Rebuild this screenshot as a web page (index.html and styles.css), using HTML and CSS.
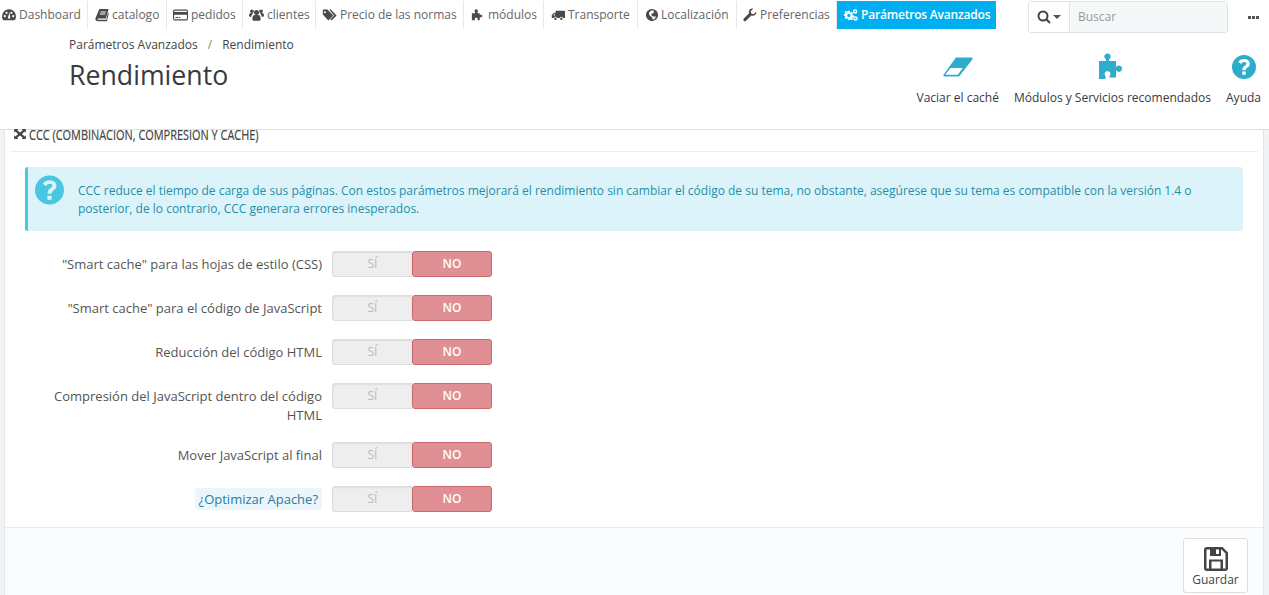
FILE: index.html
```html
<!DOCTYPE html>
<html lang="es">
<head>
<meta charset="utf-8">
<title>Rendimiento</title>
<link rel="stylesheet" href="styles.css">
</head>
<body>
<header class="topbar">
  <nav class="nav">
    <a class="nav-item w-dash"><svg class="ni" viewBox="0 0 16 16"><path fill-rule="evenodd" d="M8 1.500a7.800 7.800 0 0 0-8 7.800c0 1.800.6 3.500 1.500 4.700h13c.9-1.200 1.500-2.900 1.500-4.700a7.800 7.800 0 0 0-8-7.800zM3.200 8a1.300 1.300 0 1 1 0 2.600 1.300 1.300 0 0 1 0-2.600zm2-3.800a1.300 1.300 0 1 1 0 2.600 1.300 1.300 0 0 1 0-2.600zm5.600 0a1.300 1.300 0 1 1 0 2.600 1.300 1.300 0 0 1 0-2.600zM12.800 8a1.300 1.300 0 1 1 0 2.600 1.300 1.300 0 0 1 0-2.600zM8.600 4.500 9.500 12H6.500z"/></svg>Dashboard</a>
    <a class="nav-item w-cat"><svg class="ni" viewBox="0 0 16 16"><path d="M5 1h10.500l-3 11H4c-1.200 0-1.400 1.300-.2 1.300H13l1.800-8 1 .6-2.200 9.100H3c-2 0-3-1.500-2.400-3.500zm1.500 3-.3 1h6l.3-1zm-.7 2.300-.3 1h6l.3-1z"/></svg>catalogo</a>
    <a class="nav-item w-ped"><svg class="ni wide" viewBox="0 0 18 16"><path fill-rule="evenodd" d="M2 1.500h14a2 2 0 0 1 2 2v9a2 2 0 0 1-2 2H2a2 2 0 0 1-2-2v-9a2 2 0 0 1 2-2zm-.7 3h15.400v-1c0-.4-.3-.7-.7-.7H2c-.4 0-.7.300-.7.700zm0 3.200v4.800c0 .4.300.7.700.7h14c.4 0 .7-.3.7-.7V7.700zM3 10.500h3v1H3zm4 0h2v1H7z"/></svg>pedidos</a>
    <a class="nav-item w-cli"><svg class="ni wide" viewBox="0 0 18 16"><circle cx="9" cy="5" r="3"/><circle cx="3.500" cy="3.500" r="2.200"/><circle cx="14.500" cy="3.500" r="2.200"/><path d="M4 13c0-3 1-5 3-5h4c2 0 3 2 3 5 0 1-1 2-2 2H6c-1 0-2-1-2-2zM0 9c0-2 1-3.300 2-3.300h3c-1 1-2 2-2 4.300H1c-.6 0-1-.4-1-1zM18 9c0-2-1-3.300-2-3.300h-3c1 1 2 2 2 4.300h2c.6 0 1-.4 1-1z"/></svg>clientes</a>
    <a class="nav-item w-pre"><svg class="ni wide" viewBox="0 0 18 16"><path fill-rule="evenodd" d="M1 1.500h5.500l7 7-6 6-6.500-7zM3.500 3.500a1.200 1.200 0 1 0 0 2.400 1.200 1.200 0 0 0 0-2.400z"/><path d="M8.500 1.500h2l7 7-6 6-1.500-1.500 4.500-4.500z"/></svg>Precio de las normas</a>
    <a class="nav-item w-mod"><svg class="ni" viewBox="0 0 16 16"><path d="M1 6h3.500V4.500c-.8-1-.4-3 1.500-3s2.300 2 1.500 3V6H10v2.300c1-.8 3-.8 3 .9s-2 1.800-3 1V14H7.500v-1.200c.5-1-.3-1.800-1.500-1.800s-2 .8-1.500 1.800V14H1z"/></svg>módulos</a>
    <a class="nav-item w-tra"><svg class="ni" viewBox="0 0 18 16"><path fill-rule="evenodd" d="M6 2.500h11c.6 0 1 .4 1 1V12h-2.500a2.200 2.200 0 0 0-4.300 0H7.800a2.200 2.200 0 0 0-4.300 0H1V8l3-3h2zM5 6.200 2.800 8.500H5z"/><circle cx="5.700" cy="12.800" r="1.500"/><circle cx="13.300" cy="12.800" r="1.500"/></svg>Transporte</a>
    <a class="nav-item w-loc"><svg class="ni globe" viewBox="0 0 16 16"><path fill-rule="evenodd" d="M8 1a7 7 0 1 0 0 14A7 7 0 0 0 8 1zM5 4.500l3-2 2.500 1-1 2.500-2.500.5 1 2.500 2.500 1 2-1-1 3-2.500 1.500-1-3-2-1.500-1.500-2z"/></svg>Localización</a>
    <a class="nav-item w-prf"><svg class="ni" viewBox="0 0 16 16"><path d="M15 4.200 12.200 7 9.500 6.300 8.800 3.600 11.600.8C9.500 0 7 1.500 6.700 4c-.1.800 0 1.300.3 2L1 12c-.8.800-.8 1.700 0 2.500s1.700.8 2.500 0l6-6c2.800 1 6.200-1 5.500-4.300z"/></svg>Preferencias</a>
    <a class="nav-item active"><svg class="ni wide" viewBox="0 0 18 16"><path fill-rule="evenodd" d="M6 3h2l.3 1.500 1.200.6 1.300-.7 1.200 1.300-.8 1.200.5 1.300 1.500.3v1.800l-1.500.3-.5 1.300.8 1.200-1.200 1.300-1.300-.8-1.200.5L8 14H6l-.3-1.500-1.200-.5-1.300.8L2 11.500l.8-1.200-.5-1.300L.8 8.700V7l1.500-.3.500-1.300L2 4.200l1.200-1.300 1.300.8 1.200-.6zM7 6.500a2 2 0 1 0 0 4 2 2 0 0 0 0-4z"/><path fill-rule="evenodd" d="M14.500 1a2.700 2.700 0 1 0 0 5.400 2.700 2.700 0 0 0 0-5.400zm0 1.700a1 1 0 1 1 0 2 1 1 0 0 1 0-2zM15 9.500a2.700 2.700 0 1 0 0 5.400 2.700 2.700 0 0 0 0-5.400zm0 1.700a1 1 0 1 1 0 2 1 1 0 0 1 0-2z"/></svg>Parámetros Avanzados</a>
  </nav>
  <div class="search">
    <button class="search-btn" type="button"><svg class="search-ic" viewBox="0 0 14 14"><circle cx="6" cy="6" r="4.500"/><path d="M9.300 9.300 13 13"/></svg><span class="caret"></span></button>
    <span class="search-input">Buscar</span>
  </div>
  <span class="dots"><i></i><i></i><i></i></span>
</header>

<section class="page-head">
  <div class="head-left">
    <p class="crumbs">Parámetros Avanzados<span class="sep">/</span>Rendimiento</p>
    <h1 class="title">Rendimiento</h1>
  </div>
  <div class="tools">
    <a class="tool"><svg class="tool-ic" viewBox="0 0 34 28"><path fill-rule="evenodd" d="M14 5c.5-.6 1-1 2-1h15c1.500 0 2 1 1 2.200L19 23c-.6.800-1.200 1-2 1H3c-1.500 0-2-1.200-1-2.300zM9 15 3.700 21.800c-.2.300 0 .5.300.5h12c.5 0 .9-.2 1.200-.6l5-6.700z"/></svg>Vaciar el caché</a>
    <a class="tool"><svg class="tool-ic" viewBox="0 0 30 28"><path d="M2 8h7V6.500C7.500 5 7 3.800 7.500 2.500 8 1.200 9.200.5 10.500.5s2.600.7 3 2c.5 1.300 0 2.500-1.500 4V8h7v6c1.300-1.200 2.600-1.700 4-1.200 1.300.4 2 1.700 2 3s-.7 2.500-2 3c-1.400.4-2.700 0-4-1.300v7h-6.500v-1.500c1-1.300 1.200-2.400.7-3.300-.5-1-1.300-1.500-2.700-1.500s-2.300.5-2.700 1.500c-.5 1 0 2 .7 3.300V26H2z"/></svg>Módulos y Servicios recomendados</a>
    <a class="tool"><svg class="tool-ic" viewBox="0 0 28 28"><path fill-rule="evenodd" d="M14 2a12 12 0 1 0 0 24 12 12 0 0 0 0-24zm-1.700 16.500h3.400v3.300h-3.400zM14 6c3.300 0 5.800 2 5.800 4.800 0 2-1 3-2.500 4-1 .7-1.500 1-1.600 2.500h-3.300c0-2.500.8-3.500 2.300-4.500 1-.7 1.700-1.100 1.700-2 0-1-.9-1.700-2.300-1.700-1.500 0-2.400.8-3 2L8.200 9.100C9.300 7.200 11.300 6 14 6z"/></svg>Ayuda</a>
  </div>
</section>

<div class="content">
<main class="panel">
  <h2 class="panel-title"><svg class="pt-ic" viewBox="0 0 14 12"><path d="M0 0h5L3.600 1.400 7 4.300 10.400 1.400 9 0h5v4.400l-1.500-1.300L9.300 6l3.200 2.900L14 7.600V12H9l1.400-1.400L7 7.700l-3.400 2.900L5 12H0V7.600l1.500 1.300L4.700 6 1.500 3.100 0 4.400z"/></svg><span class="pt-text">CCC (COMBINACION, COMPRESION Y CACHE)</span></h2>

  <div class="alert">
    <svg class="alert-ic" viewBox="0 0 28 28"><path fill-rule="evenodd" d="M14 0a14 14 0 1 0 0 28 14 14 0 0 0 0-28zm-2 19.500h4v3.800h-4zM14 4.500c3.800 0 6.700 2.300 6.700 5.500 0 2.300-1.200 3.500-2.900 4.600-1.100.8-1.700 1.200-1.800 2.900h-3.800c0-2.900.9-4 2.600-5.200 1.200-.8 2-1.300 2-2.300 0-1.200-1-2-2.700-2-1.700 0-2.700.9-3.400 2.300L7.500 8c1.300-2.200 3.600-3.500 6.500-3.500z"/></svg>
    <p class="alert-text">CCC reduce el tiempo de carga de sus páginas. Con estos parámetros mejorará el rendimiento sin cambiar el código de su tema, no obstante, asegúrese que su tema es compatible con la versión 1.4 o posterior, de lo contrario, CCC generara errores inesperados.</p>
  </div>

  <div class="form">
    <div class="row"><label class="lbl">"Smart cache" para las hojas de estilo (CSS)</label><div class="sw"><span class="si">SÍ</span><span class="no">NO</span></div></div>
    <div class="row"><label class="lbl">"Smart cache" para el código de JavaScript</label><div class="sw"><span class="si">SÍ</span><span class="no">NO</span></div></div>
    <div class="row"><label class="lbl">Reducción del código HTML</label><div class="sw"><span class="si">SÍ</span><span class="no">NO</span></div></div>
    <div class="row"><label class="lbl">Compresión del JavaScript dentro del código HTML</label><div class="sw"><span class="si">SÍ</span><span class="no">NO</span></div></div>
    <div class="row"><label class="lbl">Mover JavaScript al final</label><div class="sw"><span class="si">SÍ</span><span class="no">NO</span></div></div>
    <div class="row last"><label class="lbl"><span class="hint">¿Optimizar Apache?</span></label><div class="sw"><span class="si">SÍ</span><span class="no">NO</span></div></div>
  </div>

  <footer class="panel-foot">
    <button class="save" type="button"><svg class="save-ic" viewBox="0 0 24 24"><path fill-rule="evenodd" d="M3 0h15.500L24 5.500V21a3 3 0 0 1-3 3H3a3 3 0 0 1-3-3V3a3 3 0 0 1 3-3zm-.5 2.500v19h2.500v-9h14v9h2.500V6.500l-4-4H17v6.500H6V2.500zM7.500 14.500v7h9v-7zM12 2.500v4.500h3V2.500z"/></svg>Guardar</button>
  </footer>
</main>
</div>
</body>
</html>
```
FILE: styles.css
```css
* { box-sizing: border-box; }
html, body { margin: 0; padding: 0; }
body {
  width: 1269px;
  height: 595px;
  overflow: hidden;
  background: #fff;
  font-family: "Open Sans", sans-serif;
  font-size: 12px;
  color: #555;
}
.topbar { display: flex; height: 29px; padding-top: 1px; position: relative; }
.nav { display: flex; height: 28px; width: 996px; flex: none; }
.nav-item {
  display: flex;
  align-items: center;
  height: 28px;
  padding-bottom: 1px;
  border-right: 1px solid #e8e8e8;
  color: #666;
  white-space: nowrap;
  font-size: 12px;
}
.ni { width: 14px; height: 14px; margin-right: 3px; fill: #4a4a4a; flex: none; }
.ni.wide { width: 15px; }
.ni.globe { margin-right: 2px; }
.w-dash { width: 88px; padding-left: 2px; }
.w-cat { width: 79px; padding-left: 7px; }
.w-ped { width: 76px; padding-left: 6px; }
.w-cli { width: 73px; padding-left: 6px; }
.w-pre { width: 148px; padding-left: 6px; }
.w-mod { width: 80px; padding-left: 7px; }
.w-tra { width: 94px; padding-left: 7px; }
.w-loc { width: 99px; padding-left: 7px; }
.w-prf { width: 100px; padding-left: 6px; }
.active {
  flex: 1;
  background: #00aff0;
  color: #fff;
  font-weight: 600;
  letter-spacing: -.2px;
  border-right: 0;
  padding-left: 6px;
}
.active .ni { fill: #fff; }
.search {
  display: flex;
  width: 200px;
  height: 32px;
  margin-left: 32px;
  border: 1px solid #dbe6e9;
  border-radius: 3px;
  overflow: hidden;
}
.search-btn {
  width: 41px;
  background: #fff;
  border: 0;
  border-right: 1px solid #dbe6e9;
  padding: 0 0 0 8px;
  display: flex;
  align-items: center;
}
.search-ic { width: 14px; height: 14px; fill: none; stroke: #444; stroke-width: 2; }
.caret {
  margin-left: 2px;
  border: 4px solid transparent;
  border-top: 4px solid #555;
  border-bottom: 0;
}
.search-input {
  flex: 1;
  background: #f5f8f9;
  color: #999;
  padding-left: 8px;
  line-height: 30px;
}
.dots { display: flex; gap: 1px; margin: 15px 0 0 20px; height: 3px; }
.dots i { width: 3px; height: 3px; background: #555; }

.page-head {
  display: flex;
  justify-content: space-between;
  height: 101px;
  padding-left: 69px;
  border-bottom: 1px solid #dfdfdf;
}
.crumbs { margin: 7px 0 0; font-size: 12px; line-height: 17px; color: #444; }
.sep { margin: 0 10px; color: #7a8a5a; }
.title { margin: 4px 0 0; font-size: 26.700px; line-height: 36px; font-weight: 400; color: #363a41; }
.tools { display: flex; gap: 15px; padding: 24px 8px 0 0; }
.tool {
  display: flex;
  flex-direction: column;
  align-items: center;
  color: #363a41;
  font-size: 12px;
  line-height: 17px;
}
.tool-ic { width: 32px; height: 28px; margin-bottom: 8px; fill: #2eacce; }

.content {
  height: 465px;
  padding: 0 5px 0 4px;
  background: #f1f3f4;
}
.panel {
  display: flex;
  flex-direction: column;
  height: 100%;
  background: #fff;
  border-left: 1px solid #e3e5e7;
  border-right: 1px solid #e3e5e7;
}
.panel-title {
  display: flex;
  align-items: center;
  height: 22px;
  margin: 0 5px;
  padding: 0 0 13px 4px;
  border-bottom: 1px solid #eee;
  font-size: 14px;
  font-weight: 400;
  color: #444;
  white-space: nowrap;
}
.pt-ic { width: 12px; height: 10px; margin-right: 3px; fill: #444; flex: none; }
.pt-text { display: inline-block; transform: scaleX(.78); transform-origin: left center; -webkit-text-stroke: .2px #444; }
.alert {
  display: flex;
  flex: none;
  height: 64px;
  margin: 15px 20px 0 20px;
  padding: 8px 40px 0 7px;
  background: #dcf4f9;
  border-left: 3px solid #4ac7e0;
  border-radius: 3px;
}
.alert-ic { width: 29px; height: 30px; margin: 0 14px 0 0; flex: none; fill: #4ac7e0; }
.alert-text { margin: 7px 0 0; font-size: 12px; line-height: 18px; color: #1f8fa8; }
.form { padding-top: 20px; }
.row { display: flex; align-items: flex-start; margin-bottom: 18px; }
.lbl {
  width: 317px;
  margin-bottom: -1px;
  padding: 4px 0 0 45px;
  text-align: right;
  font-size: 13px;
  line-height: 19px;
  color: #555;
}
.hint {
  background: #eaf6fb;
  color: #2c7a9f;
  border-radius: 3px;
  padding: 2px 4px;
}
.sw { display: flex; width: 160px; height: 26px; margin-left: 10px; flex: none; }
.si {
  width: 80px;
  background: #eee;
  border: 1px solid #ddd;
  border-right: 0;
  border-radius: 3px 0 0 3px;
  box-shadow: inset 0 1px 2px rgba(0, 0, 0, .07);
  color: #bbb;
  text-align: center;
  line-height: 24px;
  font-size: 12px;
}
.no {
  width: 80px;
  background: #e08f95;
  border: 1px solid #c9686f;
  border-radius: 3px;
  color: #fff;
  font-weight: 600;
  text-align: center;
  line-height: 24px;
  font-size: 12px;
}
.row.last { margin-bottom: 15px; }
.panel-foot {
  display: flex;
  flex: 1;
  justify-content: flex-end;
  padding: 10px 15px 0 0;
  background: #fbfcfe;
  border-top: 1px solid #e8eaec;
}
.save {
  display: flex;
  flex-direction: column;
  align-items: center;
  width: 65px;
  height: 55px;
  padding: 8px 0 0;
  background: #fff;
  border: 1px solid #dedede;
  border-radius: 3px;
  color: #444;
  font-family: inherit;
  font-size: 12px;
  line-height: 16px;
}
.save-ic { width: 24px; height: 24px; fill: #444; margin-bottom: 1px; }
```
